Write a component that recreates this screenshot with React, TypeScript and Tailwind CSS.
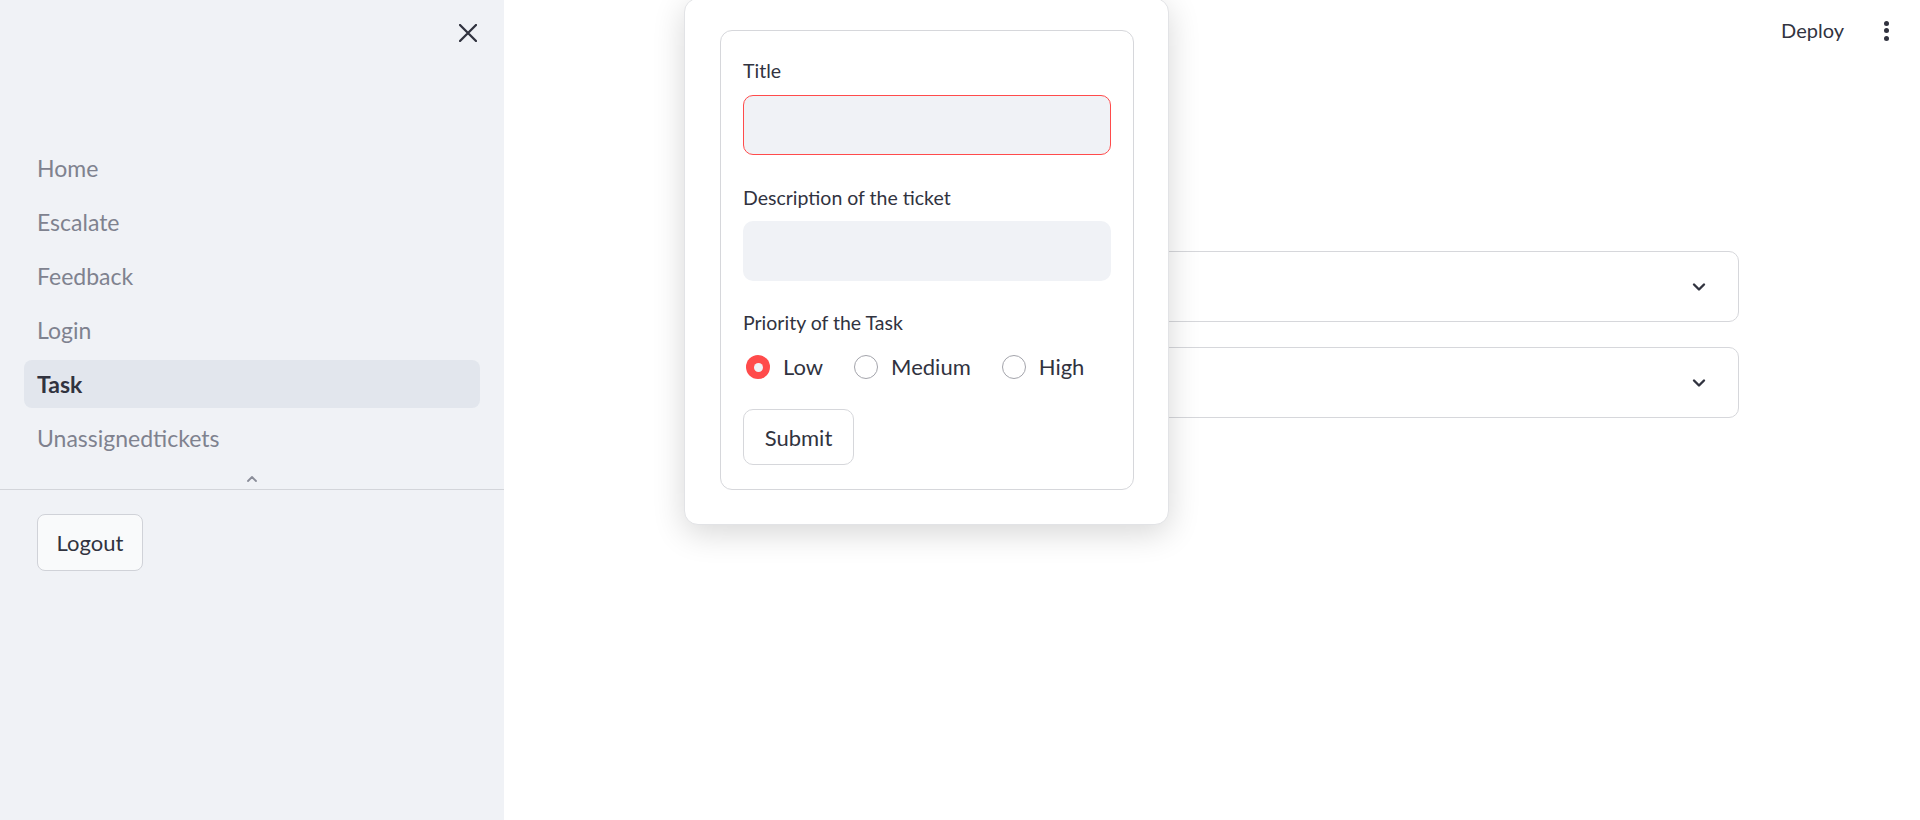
import React from 'react'

const font = "font-['Lato','Liberation_Sans',sans-serif]"

const navItems = ['Home', 'Escalate', 'Feedback', 'Login', 'Task', 'Unassignedtickets']

const ChevronDown = () => (
  <svg width="16" height="16" viewBox="0 0 16 16" fill="none">
    <path d="M3 5.5 L8 10.5 L13 5.5" stroke="#31333f" strokeWidth="2.4" strokeLinecap="round" strokeLinejoin="round" />
  </svg>
)

const Sidebar = () => (
  <aside className="w-[504px] shrink-0 h-[820px] bg-[#f0f2f6] flex flex-col">
    <div className="h-[144px] flex justify-end items-start pt-[24px] pr-[27px]">
      <svg width="18" height="18" viewBox="0 0 18 18" fill="none">
        <path d="M1 1 L17 17 M17 1 L1 17" stroke="#31333f" strokeWidth="2.3" strokeLinecap="round" />
      </svg>
    </div>
    <nav className="flex flex-col gap-[6px] px-[24px]">
      {navItems.map((item) => (
        <div
          key={item}
          className={
            item === 'Task'
              ? 'h-[48px] px-[13px] flex items-center rounded-[8px] bg-[#e2e6ed] text-[23px] font-bold text-[#31333f]'
              : 'h-[48px] px-[13px] flex items-center rounded-[8px] text-[23px] text-[#7f828f]'
          }
        >
          {item}
        </div>
      ))}
    </nav>
    <div className="h-[28px] flex items-center justify-center pt-[6px] border-b border-[#d3d5da]">
      <svg width="12" height="8" viewBox="0 0 12 8" fill="none">
        <path d="M2 6 L6 2 L10 6" stroke="#8a8d99" strokeWidth="1.8" strokeLinecap="round" strokeLinejoin="round" />
      </svg>
    </div>
    <div className="pt-[24px] pl-[37px]">
      <button className="w-[106px] h-[57px] rounded-[8px] border border-[#d0d2d8] bg-[#f9fafb] text-[22px] text-[#31333f]">
        Logout
      </button>
    </div>
  </aside>
)

const Radio = ({ label, checked }: { label: string; checked?: boolean }) => (
  <div className="flex items-center gap-[13px]">
    {checked ? (
      <span className="w-[24px] h-[24px] rounded-full bg-[#ff4b4b] flex items-center justify-center">
        <span className="w-[9px] h-[9px] rounded-full bg-[#f0f2f6]" />
      </span>
    ) : (
      <span className="w-[24px] h-[24px] rounded-full border-[1.5px] border-[#a3a4ab] bg-white" />
    )}
    <span className="text-[22px] text-[#31333f] leading-[24px]">{label}</span>
  </div>
)

const TaskPopover = () => (
  <div className="absolute left-[180px] top-[-2px] w-[485px] h-[527px] rounded-[14px] bg-white border border-[#e2e3e6] shadow-[0_8px_32px_rgba(0,0,0,0.16)] pt-[31px] pl-[35px] pr-[34px]">
    <form className="rounded-[12px] border border-[#d6d7db] px-[22px] pt-[28px] pb-[24px] flex flex-col">
      <label className="text-[19.5px] leading-[24px] text-[#31333f]">Title</label>
      <div className="mt-[12px] h-[60px] rounded-[10px] border border-[#ff4b4b] bg-[#f0f2f6]" />
      <label className="mt-[31px] text-[19.5px] leading-[24px] text-[#31333f]">Description of the ticket</label>
      <div className="mt-[11px] h-[60px] rounded-[10px] bg-[#f0f2f6]" />
      <label className="mt-[30px] text-[19.5px] leading-[24px] text-[#31333f]">Priority of the Task</label>
      <div className="mt-[20px] flex items-center gap-[31px] pl-[3px]">
        <Radio label="Low" checked />
        <Radio label="Medium" />
        <Radio label="High" />
      </div>
      <div className="mt-[30px]">
        <button type="button" className="w-[111px] h-[56px] rounded-[10px] border border-[#d6d7db] bg-white text-[22px] text-[#31333f]">
          Submit
        </button>
      </div>
    </form>
  </div>
)

export default function App() {
  return (
    <div className={`${font} flex w-[1920px] h-[820px] overflow-hidden bg-white`}>
      <Sidebar />
      <main className="flex-1 relative">
        <header className="h-[60px] flex items-center justify-end pr-[31px] gap-[40px]">
          <span className="text-[20px] text-[#31333f]">Deploy</span>
          <span className="flex flex-col gap-[2.5px] items-center pt-[1px]">
            <span className="w-[5px] h-[5px] rounded-full bg-[#31333f]" />
            <span className="w-[5px] h-[5px] rounded-full bg-[#31333f]" />
            <span className="w-[5px] h-[5px] rounded-full bg-[#31333f]" />
          </span>
        </header>
        <section className="px-[181px] pt-[191px] flex flex-col gap-[25px]">
          <div className="h-[71px] rounded-[10px] border border-[#d6d7db] flex items-center justify-end pr-[31px]">
            <ChevronDown />
          </div>
          <div className="h-[71px] rounded-[10px] border border-[#d6d7db] flex items-center justify-end pr-[31px]">
            <ChevronDown />
          </div>
        </section>
        <TaskPopover />
      </main>
    </div>
  )
}
